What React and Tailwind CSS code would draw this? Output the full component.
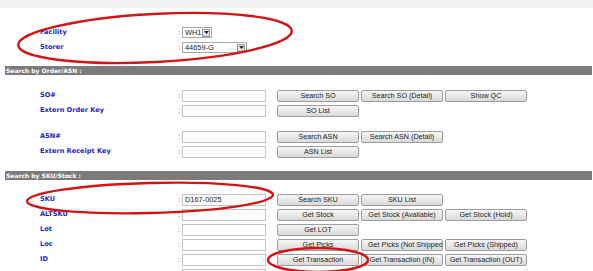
import React from "react";

const labelCls =
  "w-[138px] shrink-0 text-[6.6px] font-bold text-[#1e1ec8] leading-none whitespace-nowrap";

function Btn({ children, left }) {
  return (
    <div
      className={
        "h-[12px] w-[82px] shrink-0 overflow-hidden whitespace-nowrap rounded-[2px] border border-[#9c9c9c] bg-gradient-to-b from-[#f6f6f6] to-[#dadada] flex items-center text-[7.2px] leading-none text-[#222] " +
        (left ? "justify-start pl-[6px]" : "justify-center")
      }
      style={{ fontFamily: '"Liberation Sans", Arial, sans-serif' }}
    >
      {children}
    </div>
  );
}

function Row({ label, value, buttons, noColon }) {
  return (
    <div className="h-[15px] flex items-center pl-[40px]">
      <div className={labelCls} style={{ fontFamily: '"DejaVu Sans", Verdana, sans-serif' }}>
        {label}
      </div>
      <div className="w-[4px] shrink-0 text-[7px] leading-none text-[#555]" style={{ fontFamily: '"Liberation Sans", Arial, sans-serif' }}>
        {noColon ? "" : ":"}
      </div>
      <div
        className="h-[12px] w-[84px] shrink-0 border border-[#c4c4c4] bg-white flex items-center pl-[2px] text-[7.4px] leading-none text-[#222]"
        style={{ fontFamily: '"Liberation Sans", Arial, sans-serif' }}
      >
        {value}
      </div>
      {buttons && (
        <div className="ml-[11px] flex gap-[2px]">
          {buttons.map((b, i) => (
            <Btn key={i} left={b.left}>
              {b.t}
            </Btn>
          ))}
        </div>
      )}
    </div>
  );
}

function Select({ value, w }) {
  return (
    <div
      className={"h-[11px] shrink-0 border border-[#a8a8a8] bg-white flex items-center justify-between pl-[2px] pr-[1px] " + w}
      style={{ fontFamily: '"Liberation Sans", Arial, sans-serif' }}
    >
      <span className="text-[7.4px] leading-none text-[#222]">{value}</span>
      <span className="h-[8px] w-[8px] border border-[#9a9a9a] bg-gradient-to-b from-[#f4f4f4] to-[#d6d6d6] flex items-center justify-center">
        <svg width="5" height="3" viewBox="0 0 5 3">
          <path d="M0 0 L5 0 L2.5 3 Z" fill="#222" />
        </svg>
      </span>
    </div>
  );
}

function TopRow({ label, children }) {
  return (
    <div className="h-[15px] flex items-center pl-[40px]">
      <div className={labelCls} style={{ fontFamily: '"DejaVu Sans", Verdana, sans-serif' }}>
        {label}
      </div>
      <div className="w-[4px] shrink-0 text-[7px] leading-none text-[#555]" style={{ fontFamily: '"Liberation Sans", Arial, sans-serif' }}>:</div>
      {children}
    </div>
  );
}

function Bar({ children }) {
  return (
    <div
      className="ml-[5px] mr-[1px] h-[9px] bg-[#7b7b7b] flex items-center pl-[1px] text-[6px] font-bold leading-none text-white whitespace-nowrap"
      style={{ fontFamily: '"DejaVu Sans", Verdana, sans-serif' }}
    >
      {children}
    </div>
  );
}

export default function App() {
  return (
    <div className="relative w-[593px] h-[271px] overflow-hidden bg-white">
      <div className="h-[8px] bg-[#f2f2f2]" />
      <div className="h-[17px]" />
      <TopRow label="Facility">
        <Select value="WH1" w="w-[30px]" />
      </TopRow>
      <TopRow label="Storer">
        <Select value="44659-G" w="w-[65px]" />
      </TopRow>
      <div className="h-[11px]" />
      <Bar>Search by Order/ASN :</Bar>
      <div className="h-[13px]" />
      <Row
        label="SO#"
        buttons={[{ t: "Search SO" }, { t: "Search SO (Detail)" }, { t: "Show QC" }]}
      />
      <Row label="Extern Order Key" buttons={[{ t: "SO List" }]} />
      <div className="h-[11px]" />
      <Row label="ASN#" buttons={[{ t: "Search ASN" }, { t: "Search ASN (Detail)" }]} />
      <Row label="Extern Receipt Key" buttons={[{ t: "ASN List" }]} />
      <div className="h-[12px]" />
      <Bar>Search by SKU/Stock :</Bar>
      <div className="h-[12px]" />
      <Row label="SKU" value="D167-0025" buttons={[{ t: "Search SKU" }, { t: "SKU List" }]} />
      <Row
        label="ALTSKU"
        buttons={[{ t: "Get Stock" }, { t: "Get Stock (Available)" }, { t: "Get Stock (Hold)" }]}
      />
      <Row label="Lot" buttons={[{ t: "Get LOT" }]} />
      <Row
        label="Loc"
        buttons={[
          { t: "Get Picks" },
          { t: "Get Picks (Not Shipped)", left: true },
          { t: "Get Picks (Shipped)" },
        ]}
      />
      <Row
        label="ID"
        buttons={[
          { t: "Get Transaction" },
          { t: "Get Transaction (IN)" },
          { t: "Get Transaction (OUT)" },
        ]}
      />
      <Row label="" noColon />

      <svg
        className="pointer-events-none absolute left-0 top-0"
        width="593"
        height="271"
        viewBox="0 0 593 271"
      >
        <ellipse
          cx="155"
          cy="38"
          rx="137"
          ry="24"
          transform="rotate(-3 155 38)"
          fill="none"
          stroke="#d41414"
          strokeWidth="2.4"
        />
        <ellipse
          cx="150"
          cy="198"
          rx="123"
          ry="15"
          transform="rotate(-1.5 150 198)"
          fill="none"
          stroke="#d41414"
          strokeWidth="2.4"
        />
        <ellipse
          cx="318"
          cy="260"
          rx="50"
          ry="12"
          fill="none"
          stroke="#d41414"
          strokeWidth="2.4"
        />
      </svg>
    </div>
  );
}
